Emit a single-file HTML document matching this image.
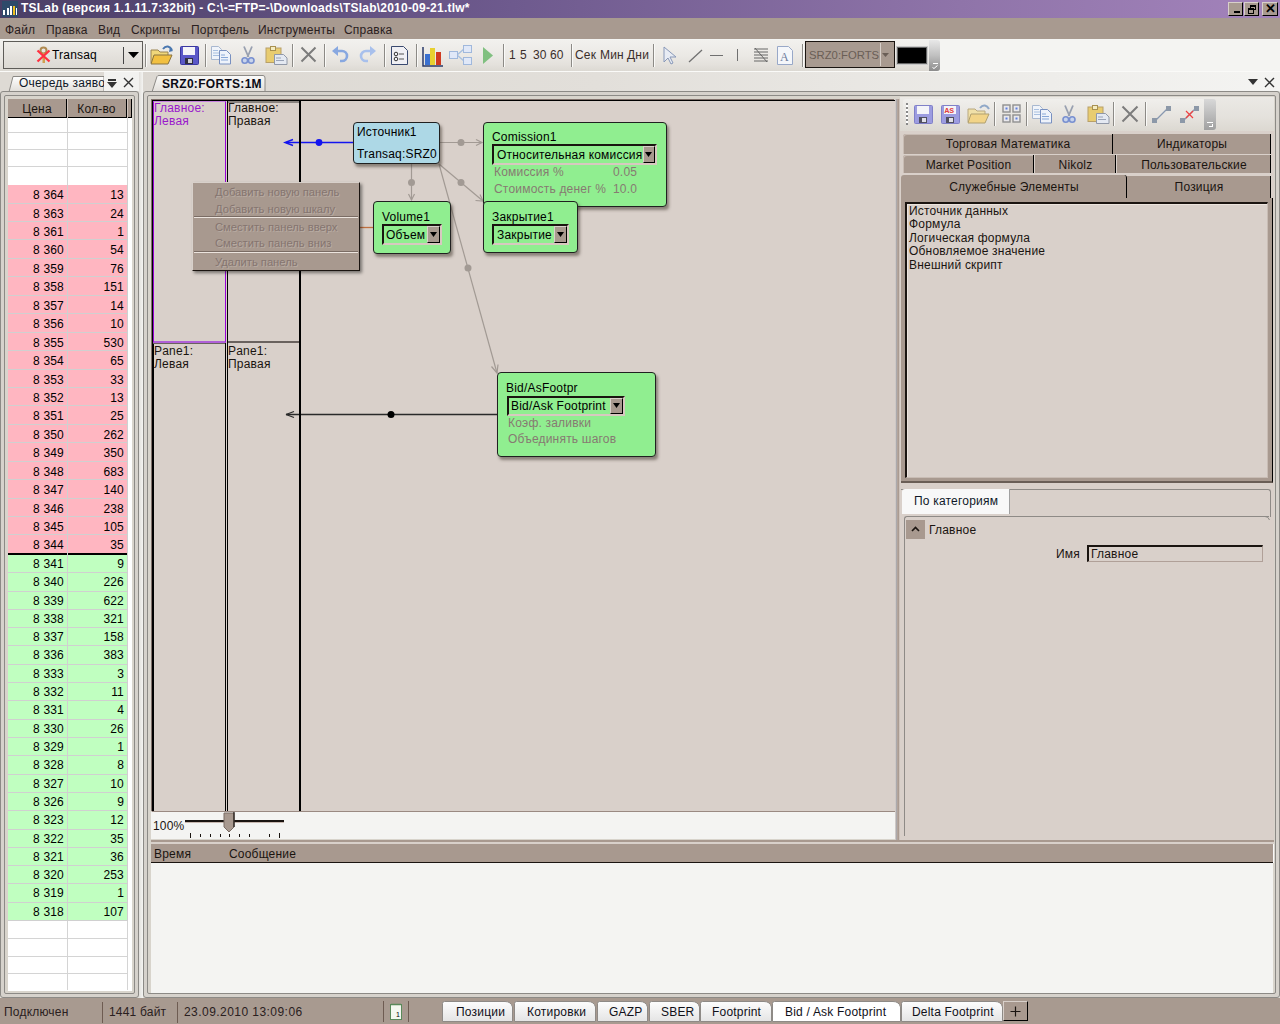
<!DOCTYPE html>
<html><head><meta charset="utf-8">
<style>
*{margin:0;padding:0;box-sizing:border-box}
html,body{width:1280px;height:1024px;overflow:hidden;background:#e2dfd9;font-family:"Liberation Sans",sans-serif;font-size:12px;color:#000}
.a{position:absolute}
.t{position:absolute;white-space:nowrap;line-height:13px;margin-top:1px;letter-spacing:0.2px}
#title{left:0;top:0;width:1280px;height:18px;background:linear-gradient(to right,#4a3e66 0%,#6e5a8e 40%,#8f74a9 75%,#a383bb 100%)}
#menu{left:0;top:18px;width:1280px;height:21px;background:#a89a90}
#tb{left:0;top:39px;width:1280px;height:33px;background:#f4f4f2}
.sep{position:absolute;top:44px;width:2px;height:23px;background:#8c8a86;border-right:1px solid #fafaf8}
#status{left:0;top:998px;width:1280px;height:26px;background:#a89a90}
</style></head><body>

<!-- TITLE -->
<div id="title" class="a">
  <div class="a" style="left:2px;top:1px;width:16px;height:16px;background:#2e4a6a"></div>
  <div class="a" style="left:3px;top:10px;width:2px;height:5px;background:#fff"></div>
  <div class="a" style="left:7px;top:8px;width:2px;height:7px;background:#fff"></div>
  <div class="a" style="left:10px;top:6px;width:2px;height:9px;background:#fff"></div>
  <div class="a" style="left:13px;top:6px;width:2px;height:9px;background:#f0c020"></div>
  <div class="a" style="left:16px;top:8px;width:1px;height:7px;background:#fff"></div>
  <div class="t" style="left:21px;top:1px;color:#fff;font-weight:bold;font-size:12px;letter-spacing:0.22px">TSLab (версия 1.1.11.7:32bit) - C:\-=FTP=-\Downloads\TSlab\2010-09-21.tlw*</div>
  <div class="a" style="left:1228px;top:2px;width:15px;height:14px;background:#a89a90;border:1px solid #000;border-color:#d8d0ca #000 #000 #d8d0ca"><div class="a" style="left:5px;top:8px;width:6px;height:2px;background:#000"></div></div>
  <div class="a" style="left:1244px;top:2px;width:15px;height:14px;background:#a89a90;border:1px solid #000;border-color:#d8d0ca #000 #000 #d8d0ca"><div class="a" style="left:5px;top:2px;width:6px;height:5px;border:1px solid #000;border-top-width:2px"></div><div class="a" style="left:3px;top:5px;width:6px;height:6px;border:1px solid #000;border-top-width:2px;background:#a89a90"></div></div>
  <div class="a" style="left:1262px;top:2px;width:16px;height:14px;background:#a89a90;border:1px solid #000;border-color:#d8d0ca #000 #000 #d8d0ca;font-size:13px;line-height:12px;text-align:center;font-weight:bold">✕</div>
</div>

<!-- MENU -->
<div id="menu" class="a">
  <div class="t" style="left:5px;top:5px;color:#2a2020">Файл</div>
  <div class="t" style="left:46px;top:5px;color:#2a2020">Правка</div>
  <div class="t" style="left:98px;top:5px;color:#2a2020">Вид</div>
  <div class="t" style="left:131px;top:5px;color:#2a2020">Скрипты</div>
  <div class="t" style="left:191px;top:5px;color:#2a2020">Портфель</div>
  <div class="t" style="left:258px;top:5px;color:#2a2020">Инструменты</div>
  <div class="t" style="left:344px;top:5px;color:#2a2020">Справка</div>
</div>

<!-- TOOLBAR -->
<div id="tb" class="a"></div><div class="a" style="left:0;top:40px;width:940px;height:31px;border-radius:0 3px 3px 0;background:linear-gradient(#f2f1ee,#ebe9e5 50%,#e4e1dc 80%,#dcd9d3)"></div>
<!-- transaq button -->
<div class="a" style="left:3px;top:41px;width:140px;height:28px;border:1px solid #5e5c58;background:linear-gradient(#eeece8,#e4e1dc 55%,#dcd9d3)"></div>
<div class="a" style="left:123px;top:47px;width:1px;height:17px;background:#444"></div>
<svg class="a" style="left:128px;top:52px" width="11" height="6"><path d="M0 0H11L5.5 6Z" fill="#000"/></svg>
<svg class="a" style="left:36px;top:46px" width="16" height="18" viewBox="0 0 16 18">
<circle cx="7.5" cy="4.5" r="3" fill="none" stroke="#b08a50" stroke-width="2"/><rect x="6.5" y="7" width="2.5" height="10" fill="#d0a050"/>
<path d="M1.5 4.5L13.5 15.5M13.5 4.5L1.5 15.5" stroke="#ff3040" stroke-width="2.3"/></svg>
<div class="t" style="left:52px;top:48px;font-size:12px">Transaq</div>
<div class="sep" style="left:145px"></div>
<!-- open -->
<svg class="a" style="left:150px;top:45px" width="24" height="20" viewBox="0 0 24 20">
<path d="M1 5h7l2 2h8v11H1z" fill="#f0d77a" stroke="#9a8450"/>
<path d="M4 10h18l-4 9H1z" fill="#f2c040" stroke="#8a7440"/>
<path d="M13 4c3-4 7-3 9 1" fill="none" stroke="#4a78b0" stroke-width="2"/><path d="M20 2l3 4-4 1z" fill="#4a78b0"/></svg>
<!-- save -->
<svg class="a" style="left:180px;top:46px" width="19" height="19" viewBox="0 0 19 19">
<rect x="0.5" y="0.5" width="18" height="18" rx="1" fill="#5a58c8" stroke="#3a38a0"/>
<rect x="3" y="1" width="12" height="8" fill="#f4f4f8"/><rect x="5" y="12" width="8" height="6" fill="#303040"/><rect x="8" y="13" width="4" height="4" fill="#d0d0d8"/></svg>
<div class="sep" style="left:205px"></div>
<!-- copy -->
<svg class="a" style="left:211px;top:46px" width="21" height="19" viewBox="0 0 21 19">
<path d="M0.5 0.5h7l3 3v10h-10z" fill="#f0f4fa" stroke="#a8b8d0"/><path d="M2 4.5h5M2 7h6M2 9.5h6" stroke="#a8c0e0"/>
<path d="M8.5 4.5h7l4 4v9.5h-11z" fill="#eef3fb" stroke="#7890c0"/><path d="M10 9h4M10 11.5h7M10 14h7" stroke="#88a8d8"/></svg>
<!-- cut -->
<svg class="a" style="left:241px;top:46px" width="14" height="19" viewBox="0 0 14 19">
<path d="M3 0.5L7.5 11M11 0.5L6.5 11" stroke="#98a0b0" stroke-width="1.8"/><circle cx="3.8" cy="14.5" r="2.8" fill="#c8d4ec" stroke="#7890d0" stroke-width="1.6"/><circle cx="10.2" cy="14.5" r="2.8" fill="#c8d4ec" stroke="#7890d0" stroke-width="1.6"/></svg>
<!-- paste -->
<svg class="a" style="left:265px;top:46px" width="23" height="19" viewBox="0 0 23 19">
<rect x="1" y="2" width="15" height="14.5" fill="#e8cc70" stroke="#b8a068"/><rect x="5.5" y="0.5" width="5" height="4" fill="#f4ecc0" stroke="#a89050"/>
<path d="M9.5 8.5h9l3.5 3.5v6.5h-12.5z" fill="#e4e9f2" stroke="#9098a8"/><path d="M11 12h5M11 14.5h8" stroke="#9aa4b8"/></svg>
<div class="sep" style="left:292px"></div>
<!-- X -->
<svg class="a" style="left:300px;top:46px" width="17" height="17"><path d="M1.5 1.5L15.5 15.5M15.5 1.5L1.5 15.5" stroke="#7c7c7c" stroke-width="2"/></svg>
<div class="sep" style="left:324px"></div>
<!-- undo/redo -->
<svg class="a" style="left:332px;top:46px" width="17" height="17" viewBox="0 0 17 17">
<path d="M5 5h5a5 5 0 0 1 0 10H8" fill="none" stroke="#88a8e0" stroke-width="2.6"/><path d="M0 5l6-5v10z" fill="#88a8e0"/></svg>
<svg class="a" style="left:359px;top:46px" width="17" height="17" viewBox="0 0 17 17">
<path d="M12 5H7a5 5 0 0 0 0 10h2" fill="none" stroke="#a8c0ec" stroke-width="2.6"/><path d="M17 5l-6-5v10z" fill="#a8c0ec"/></svg>
<div class="sep" style="left:384px"></div>
<!-- doc -->
<svg class="a" style="left:391px;top:46px" width="17" height="19" viewBox="0 0 17 19">
<path d="M0.5 0.5h12l4 4v14H0.5z" fill="#f0f0f4" stroke="#3a4a70"/><circle cx="5" cy="8" r="1.8" fill="none" stroke="#333"/><circle cx="5" cy="13" r="1.8" fill="none" stroke="#333"/><path d="M8 8h5M8 13h5" stroke="#555"/></svg>
<div class="sep" style="left:416px"></div>
<!-- chart -->
<svg class="a" style="left:422px;top:45px" width="22" height="22" viewBox="0 0 22 22">
<path d="M1 2v19h20" fill="none" stroke="#2a3a6a" stroke-width="1.5"/><rect x="3" y="9" width="5" height="11" fill="#3a70d0"/><rect x="8" y="3" width="5" height="17" fill="#e8d030"/><rect x="14" y="7" width="5" height="13" fill="#d03a20"/></svg>
<!-- network -->
<svg class="a" style="left:449px;top:45px" width="23" height="21" viewBox="0 0 23 21">
<path d="M8 10L15 4M8 10L15 16" stroke="#a8c0e0" stroke-width="1.5"/><rect x="0.5" y="6.5" width="8" height="7" fill="#e0e8f8" stroke="#a0b8dc"/><rect x="14.5" y="0.5" width="8" height="7" fill="#e0e8f8" stroke="#a0b8dc"/><rect x="14.5" y="12.5" width="8" height="7" fill="#e0e8f8" stroke="#a0b8dc"/></svg>
<svg class="a" style="left:483px;top:47px" width="10" height="17"><path d="M0 0L10 8.5L0 17Z" fill="#80c080"/></svg>
<div class="sep" style="left:503px"></div>
<div class="t" style="left:509px;top:48px;color:#3a2e2a">1</div><div class="t" style="left:520px;top:48px;color:#3a2e2a">5</div><div class="t" style="left:533px;top:48px;color:#3a2e2a">30</div><div class="t" style="left:550px;top:48px;color:#3a2e2a">60</div>
<div class="sep" style="left:571px"></div>
<div class="t" style="left:575px;top:48px;color:#3a2e2a">Сек</div><div class="t" style="left:600px;top:48px;color:#3a2e2a">Мин</div><div class="t" style="left:627px;top:48px;color:#3a2e2a">Дни</div>
<div class="sep" style="left:653px"></div>
<svg class="a" style="left:663px;top:46px" width="14" height="19" viewBox="0 0 14 19"><path d="M1 1v15l4-4 3 6 2-1-3-6h6z" fill="#e8ecf4" stroke="#8898b8"/></svg>
<svg class="a" style="left:688px;top:49px" width="15" height="14"><path d="M1 13L14 1" stroke="#707070" stroke-width="1.3"/></svg>
<div class="a" style="left:710px;top:55px;width:13px;height:1px;background:#707070"></div>
<div class="a" style="left:737px;top:49px;width:1px;height:12px;background:#707070"></div>
<svg class="a" style="left:753px;top:47px" width="16" height="16" viewBox="0 0 16 16"><path d="M1 2h14M1 5h14M1 8h14M1 11h14M1 14h14" stroke="#666"/><path d="M2 1L14 15" stroke="#666"/></svg>
<svg class="a" style="left:777px;top:46px" width="16" height="19" viewBox="0 0 16 19"><path d="M0.5 0.5h11l4 4v14H0.5z" fill="#f4f6fa" stroke="#98a8c8"/><text x="3" y="15" font-family="Liberation Serif" font-size="12" fill="#6a7a9a">A</text></svg>
<div class="sep" style="left:802px"></div>
<div class="a" style="left:805px;top:41px;width:90px;height:27px;background:#a89a90;border:1px solid #1a1410;border-right-color:#1a1410"></div>
<div class="t" style="left:809px;top:48px;font-size:11.3px;letter-spacing:0;color:#6a5e56">SRZ0:FORTS</div>
<div class="a" style="left:880px;top:43px;width:12px;height:23px;background:#a89a90;border-left:1px solid #d8d0ca"></div>
<svg class="a" style="left:882px;top:53px" width="7" height="4"><path d="M0 0H7L3.5 4Z" fill="#6a5e56"/></svg>
<div class="a" style="left:897px;top:47px;width:30px;height:17px;background:#000;border:1px solid #666;box-shadow:0 0 0 1px #c8c8c8"></div>
<div class="a" style="left:929px;top:40px;width:11px;height:31px;background:linear-gradient(#e8e8e8,#c0c0c0 50%,#8c8c8c);border-radius:0 3px 3px 0"></div>
<div class="a" style="left:933px;top:63px;width:5px;height:1px;background:#fff"></div><svg class="a" style="left:932px;top:65px" width="6" height="4"><path d="M0.5 2.5L2 3.5L5.5 0.5" stroke="#fff" fill="none"/></svg>



<!-- LEFT DOCK -->
<div class="a" style="left:0;top:72px;width:143px;height:925px;background:#dedad4"></div>
<div class="a" style="left:104px;top:72px;width:35px;height:19px;background:#f2f2f0"></div>
<svg class="a" style="left:0;top:72px" width="140" height="22"><path d="M9 20L13 4.5H104V20" fill="url(#tabg)" stroke="#8c8a86"/><defs><linearGradient id="tabg" x1="0" y1="0" x2="0" y2="1"><stop offset="0" stop-color="#fff"/><stop offset="1" stop-color="#e0ddd8"/></linearGradient></defs></svg>
<div class="t" style="left:19px;top:76px;font-size:12px;color:#101828">Очередь заявок</div>
<div class="a" style="left:104px;top:72px;width:35px;height:19px;background:#f2f2f0"></div>
<div class="a" style="left:108px;top:79px;width:8px;height:2px;background:#333"></div>
<svg class="a" style="left:107px;top:82px" width="10" height="6"><path d="M0 0H10L5 6Z" fill="#333"/></svg>
<svg class="a" style="left:123px;top:77px" width="11" height="11"><path d="M1 1L10 10M10 1L1 10" stroke="#333" stroke-width="1.4"/></svg>
<div class="a" style="left:0;top:91px;width:139px;height:907px;border:1px solid #8c8a86;border-radius:3px;background:#d6d2cc"></div>
<div class="a" style="left:4px;top:95px;width:131px;height:899px;border:1px solid #8c8a86;border-radius:2px;background:#d8d4cc"></div><div class="a" style="left:8px;top:118px;width:124px;height:873px;background:#fff"></div>
<div class="a" style="left:8px;top:99px;width:124px;height:19px;background:#a8998f;border-bottom:1px solid #000"></div>
<div class="a" style="left:66px;top:99px;width:1px;height:19px;background:#000;box-shadow:1px 0 0 #d0c4bc"></div>
<div class="a" style="left:126px;top:99px;width:1px;height:19px;background:#000;box-shadow:1px 0 0 #d0c4bc"></div>
<div class="a" style="left:131px;top:99px;width:1px;height:19px;background:#000"></div>
<div class="t" style="left:8px;top:102px;width:58px;text-align:center;color:#1a1410">Цена</div>
<div class="t" style="left:67px;top:102px;width:59px;text-align:center;color:#1a1410">Кол-во</div>
<div class="a" style="left:67px;top:118px;width:1px;height:872px;background:#d4d4d4"></div>
<div class="a" style="left:127px;top:118px;width:1px;height:872px;background:#d4d4d4"></div>
<div class="a" style="left:8px;top:132px;width:120px;height:1px;background:#d4d4d4"></div>
<div class="a" style="left:8px;top:149px;width:120px;height:1px;background:#d4d4d4"></div>
<div class="a" style="left:8px;top:166px;width:120px;height:1px;background:#d4d4d4"></div>
<div class="a" style="left:8px;top:185px;width:120px;height:19px;background:#ffb6c1"></div>
<div class="t" style="left:8px;top:188px;width:56px;text-align:right">8 364</div>
<div class="t" style="left:68px;top:188px;width:56px;text-align:right">13</div>
<div class="a" style="left:8px;top:203px;width:120px;height:1px;background:#d0d0d0"></div>
<div class="a" style="left:8px;top:204px;width:120px;height:18px;background:#ffb6c1"></div>
<div class="t" style="left:8px;top:207px;width:56px;text-align:right">8 363</div>
<div class="t" style="left:68px;top:207px;width:56px;text-align:right">24</div>
<div class="a" style="left:8px;top:221px;width:120px;height:1px;background:#d0d0d0"></div>
<div class="a" style="left:8px;top:222px;width:120px;height:18px;background:#ffb6c1"></div>
<div class="t" style="left:8px;top:225px;width:56px;text-align:right">8 361</div>
<div class="t" style="left:68px;top:225px;width:56px;text-align:right">1</div>
<div class="a" style="left:8px;top:239px;width:120px;height:1px;background:#d0d0d0"></div>
<div class="a" style="left:8px;top:240px;width:120px;height:19px;background:#ffb6c1"></div>
<div class="t" style="left:8px;top:243px;width:56px;text-align:right">8 360</div>
<div class="t" style="left:68px;top:243px;width:56px;text-align:right">54</div>
<div class="a" style="left:8px;top:258px;width:120px;height:1px;background:#d0d0d0"></div>
<div class="a" style="left:8px;top:259px;width:120px;height:18px;background:#ffb6c1"></div>
<div class="t" style="left:8px;top:262px;width:56px;text-align:right">8 359</div>
<div class="t" style="left:68px;top:262px;width:56px;text-align:right">76</div>
<div class="a" style="left:8px;top:276px;width:120px;height:1px;background:#d0d0d0"></div>
<div class="a" style="left:8px;top:277px;width:120px;height:19px;background:#ffb6c1"></div>
<div class="t" style="left:8px;top:280px;width:56px;text-align:right">8 358</div>
<div class="t" style="left:68px;top:280px;width:56px;text-align:right">151</div>
<div class="a" style="left:8px;top:295px;width:120px;height:1px;background:#d0d0d0"></div>
<div class="a" style="left:8px;top:296px;width:120px;height:18px;background:#ffb6c1"></div>
<div class="t" style="left:8px;top:299px;width:56px;text-align:right">8 357</div>
<div class="t" style="left:68px;top:299px;width:56px;text-align:right">14</div>
<div class="a" style="left:8px;top:313px;width:120px;height:1px;background:#d0d0d0"></div>
<div class="a" style="left:8px;top:314px;width:120px;height:19px;background:#ffb6c1"></div>
<div class="t" style="left:8px;top:317px;width:56px;text-align:right">8 356</div>
<div class="t" style="left:68px;top:317px;width:56px;text-align:right">10</div>
<div class="a" style="left:8px;top:332px;width:120px;height:1px;background:#d0d0d0"></div>
<div class="a" style="left:8px;top:333px;width:120px;height:18px;background:#ffb6c1"></div>
<div class="t" style="left:8px;top:336px;width:56px;text-align:right">8 355</div>
<div class="t" style="left:68px;top:336px;width:56px;text-align:right">530</div>
<div class="a" style="left:8px;top:350px;width:120px;height:1px;background:#d0d0d0"></div>
<div class="a" style="left:8px;top:351px;width:120px;height:19px;background:#ffb6c1"></div>
<div class="t" style="left:8px;top:354px;width:56px;text-align:right">8 354</div>
<div class="t" style="left:68px;top:354px;width:56px;text-align:right">65</div>
<div class="a" style="left:8px;top:369px;width:120px;height:1px;background:#d0d0d0"></div>
<div class="a" style="left:8px;top:370px;width:120px;height:18px;background:#ffb6c1"></div>
<div class="t" style="left:8px;top:373px;width:56px;text-align:right">8 353</div>
<div class="t" style="left:68px;top:373px;width:56px;text-align:right">33</div>
<div class="a" style="left:8px;top:387px;width:120px;height:1px;background:#d0d0d0"></div>
<div class="a" style="left:8px;top:388px;width:120px;height:18px;background:#ffb6c1"></div>
<div class="t" style="left:8px;top:391px;width:56px;text-align:right">8 352</div>
<div class="t" style="left:68px;top:391px;width:56px;text-align:right">13</div>
<div class="a" style="left:8px;top:405px;width:120px;height:1px;background:#d0d0d0"></div>
<div class="a" style="left:8px;top:406px;width:120px;height:19px;background:#ffb6c1"></div>
<div class="t" style="left:8px;top:409px;width:56px;text-align:right">8 351</div>
<div class="t" style="left:68px;top:409px;width:56px;text-align:right">25</div>
<div class="a" style="left:8px;top:424px;width:120px;height:1px;background:#d0d0d0"></div>
<div class="a" style="left:8px;top:425px;width:120px;height:18px;background:#ffb6c1"></div>
<div class="t" style="left:8px;top:428px;width:56px;text-align:right">8 350</div>
<div class="t" style="left:68px;top:428px;width:56px;text-align:right">262</div>
<div class="a" style="left:8px;top:442px;width:120px;height:1px;background:#d0d0d0"></div>
<div class="a" style="left:8px;top:443px;width:120px;height:19px;background:#ffb6c1"></div>
<div class="t" style="left:8px;top:446px;width:56px;text-align:right">8 349</div>
<div class="t" style="left:68px;top:446px;width:56px;text-align:right">350</div>
<div class="a" style="left:8px;top:461px;width:120px;height:1px;background:#d0d0d0"></div>
<div class="a" style="left:8px;top:462px;width:120px;height:18px;background:#ffb6c1"></div>
<div class="t" style="left:8px;top:465px;width:56px;text-align:right">8 348</div>
<div class="t" style="left:68px;top:465px;width:56px;text-align:right">683</div>
<div class="a" style="left:8px;top:479px;width:120px;height:1px;background:#d0d0d0"></div>
<div class="a" style="left:8px;top:480px;width:120px;height:19px;background:#ffb6c1"></div>
<div class="t" style="left:8px;top:483px;width:56px;text-align:right">8 347</div>
<div class="t" style="left:68px;top:483px;width:56px;text-align:right">140</div>
<div class="a" style="left:8px;top:498px;width:120px;height:1px;background:#d0d0d0"></div>
<div class="a" style="left:8px;top:499px;width:120px;height:18px;background:#ffb6c1"></div>
<div class="t" style="left:8px;top:502px;width:56px;text-align:right">8 346</div>
<div class="t" style="left:68px;top:502px;width:56px;text-align:right">238</div>
<div class="a" style="left:8px;top:516px;width:120px;height:1px;background:#d0d0d0"></div>
<div class="a" style="left:8px;top:517px;width:120px;height:18px;background:#ffb6c1"></div>
<div class="t" style="left:8px;top:520px;width:56px;text-align:right">8 345</div>
<div class="t" style="left:68px;top:520px;width:56px;text-align:right">105</div>
<div class="a" style="left:8px;top:534px;width:120px;height:1px;background:#d0d0d0"></div>
<div class="a" style="left:8px;top:535px;width:120px;height:18px;background:#ffb6c1"></div>
<div class="t" style="left:8px;top:538px;width:56px;text-align:right">8 344</div>
<div class="t" style="left:68px;top:538px;width:56px;text-align:right">35</div>
<div class="a" style="left:8px;top:553px;width:120px;height:2px;background:#000"></div>
<div class="a" style="left:8px;top:555px;width:120px;height:18px;background:#c0ffc0"></div>
<div class="t" style="left:8px;top:557px;width:56px;text-align:right">8 341</div>
<div class="t" style="left:68px;top:557px;width:56px;text-align:right">9</div>
<div class="a" style="left:8px;top:572px;width:120px;height:1px;background:#d0d0d0"></div>
<div class="a" style="left:8px;top:573px;width:120px;height:19px;background:#c0ffc0"></div>
<div class="t" style="left:8px;top:575px;width:56px;text-align:right">8 340</div>
<div class="t" style="left:68px;top:575px;width:56px;text-align:right">226</div>
<div class="a" style="left:8px;top:591px;width:120px;height:1px;background:#d0d0d0"></div>
<div class="a" style="left:8px;top:592px;width:120px;height:18px;background:#c0ffc0"></div>
<div class="t" style="left:8px;top:594px;width:56px;text-align:right">8 339</div>
<div class="t" style="left:68px;top:594px;width:56px;text-align:right">622</div>
<div class="a" style="left:8px;top:609px;width:120px;height:1px;background:#d0d0d0"></div>
<div class="a" style="left:8px;top:610px;width:120px;height:18px;background:#c0ffc0"></div>
<div class="t" style="left:8px;top:612px;width:56px;text-align:right">8 338</div>
<div class="t" style="left:68px;top:612px;width:56px;text-align:right">321</div>
<div class="a" style="left:8px;top:627px;width:120px;height:1px;background:#d0d0d0"></div>
<div class="a" style="left:8px;top:628px;width:120px;height:18px;background:#c0ffc0"></div>
<div class="t" style="left:8px;top:630px;width:56px;text-align:right">8 337</div>
<div class="t" style="left:68px;top:630px;width:56px;text-align:right">158</div>
<div class="a" style="left:8px;top:645px;width:120px;height:1px;background:#d0d0d0"></div>
<div class="a" style="left:8px;top:646px;width:120px;height:19px;background:#c0ffc0"></div>
<div class="t" style="left:8px;top:648px;width:56px;text-align:right">8 336</div>
<div class="t" style="left:68px;top:648px;width:56px;text-align:right">383</div>
<div class="a" style="left:8px;top:664px;width:120px;height:1px;background:#d0d0d0"></div>
<div class="a" style="left:8px;top:665px;width:120px;height:18px;background:#c0ffc0"></div>
<div class="t" style="left:8px;top:667px;width:56px;text-align:right">8 333</div>
<div class="t" style="left:68px;top:667px;width:56px;text-align:right">3</div>
<div class="a" style="left:8px;top:682px;width:120px;height:1px;background:#d0d0d0"></div>
<div class="a" style="left:8px;top:683px;width:120px;height:18px;background:#c0ffc0"></div>
<div class="t" style="left:8px;top:685px;width:56px;text-align:right">8 332</div>
<div class="t" style="left:68px;top:685px;width:56px;text-align:right">11</div>
<div class="a" style="left:8px;top:700px;width:120px;height:1px;background:#d0d0d0"></div>
<div class="a" style="left:8px;top:701px;width:120px;height:19px;background:#c0ffc0"></div>
<div class="t" style="left:8px;top:703px;width:56px;text-align:right">8 331</div>
<div class="t" style="left:68px;top:703px;width:56px;text-align:right">4</div>
<div class="a" style="left:8px;top:719px;width:120px;height:1px;background:#d0d0d0"></div>
<div class="a" style="left:8px;top:720px;width:120px;height:18px;background:#c0ffc0"></div>
<div class="t" style="left:8px;top:722px;width:56px;text-align:right">8 330</div>
<div class="t" style="left:68px;top:722px;width:56px;text-align:right">26</div>
<div class="a" style="left:8px;top:737px;width:120px;height:1px;background:#d0d0d0"></div>
<div class="a" style="left:8px;top:738px;width:120px;height:18px;background:#c0ffc0"></div>
<div class="t" style="left:8px;top:740px;width:56px;text-align:right">8 329</div>
<div class="t" style="left:68px;top:740px;width:56px;text-align:right">1</div>
<div class="a" style="left:8px;top:755px;width:120px;height:1px;background:#d0d0d0"></div>
<div class="a" style="left:8px;top:756px;width:120px;height:19px;background:#c0ffc0"></div>
<div class="t" style="left:8px;top:758px;width:56px;text-align:right">8 328</div>
<div class="t" style="left:68px;top:758px;width:56px;text-align:right">8</div>
<div class="a" style="left:8px;top:774px;width:120px;height:1px;background:#d0d0d0"></div>
<div class="a" style="left:8px;top:775px;width:120px;height:18px;background:#c0ffc0"></div>
<div class="t" style="left:8px;top:777px;width:56px;text-align:right">8 327</div>
<div class="t" style="left:68px;top:777px;width:56px;text-align:right">10</div>
<div class="a" style="left:8px;top:792px;width:120px;height:1px;background:#d0d0d0"></div>
<div class="a" style="left:8px;top:793px;width:120px;height:18px;background:#c0ffc0"></div>
<div class="t" style="left:8px;top:795px;width:56px;text-align:right">8 326</div>
<div class="t" style="left:68px;top:795px;width:56px;text-align:right">9</div>
<div class="a" style="left:8px;top:810px;width:120px;height:1px;background:#d0d0d0"></div>
<div class="a" style="left:8px;top:811px;width:120px;height:19px;background:#c0ffc0"></div>
<div class="t" style="left:8px;top:813px;width:56px;text-align:right">8 323</div>
<div class="t" style="left:68px;top:813px;width:56px;text-align:right">12</div>
<div class="a" style="left:8px;top:829px;width:120px;height:1px;background:#d0d0d0"></div>
<div class="a" style="left:8px;top:830px;width:120px;height:18px;background:#c0ffc0"></div>
<div class="t" style="left:8px;top:832px;width:56px;text-align:right">8 322</div>
<div class="t" style="left:68px;top:832px;width:56px;text-align:right">35</div>
<div class="a" style="left:8px;top:847px;width:120px;height:1px;background:#d0d0d0"></div>
<div class="a" style="left:8px;top:848px;width:120px;height:18px;background:#c0ffc0"></div>
<div class="t" style="left:8px;top:850px;width:56px;text-align:right">8 321</div>
<div class="t" style="left:68px;top:850px;width:56px;text-align:right">36</div>
<div class="a" style="left:8px;top:865px;width:120px;height:1px;background:#d0d0d0"></div>
<div class="a" style="left:8px;top:866px;width:120px;height:18px;background:#c0ffc0"></div>
<div class="t" style="left:8px;top:868px;width:56px;text-align:right">8 320</div>
<div class="t" style="left:68px;top:868px;width:56px;text-align:right">253</div>
<div class="a" style="left:8px;top:883px;width:120px;height:1px;background:#d0d0d0"></div>
<div class="a" style="left:8px;top:884px;width:120px;height:19px;background:#c0ffc0"></div>
<div class="t" style="left:8px;top:886px;width:56px;text-align:right">8 319</div>
<div class="t" style="left:68px;top:886px;width:56px;text-align:right">1</div>
<div class="a" style="left:8px;top:902px;width:120px;height:1px;background:#d0d0d0"></div>
<div class="a" style="left:8px;top:903px;width:120px;height:18px;background:#c0ffc0"></div>
<div class="t" style="left:8px;top:905px;width:56px;text-align:right">8 318</div>
<div class="t" style="left:68px;top:905px;width:56px;text-align:right">107</div>
<div class="a" style="left:8px;top:920px;width:120px;height:1px;background:#d0d0d0"></div>
<div class="a" style="left:8px;top:938px;width:120px;height:1px;background:#d4d4d4"></div>
<div class="a" style="left:8px;top:956px;width:120px;height:1px;background:#d4d4d4"></div>
<div class="a" style="left:8px;top:973px;width:120px;height:1px;background:#d4d4d4"></div>
<div class="a" style="left:67px;top:185px;width:1px;height:736px;background:#d0d0d0"></div>
<div class="a" style="left:127px;top:185px;width:1px;height:736px;background:#d0d0d0"></div>


<!-- DOC AREA -->
<div class="a" style="left:139px;top:72px;width:4px;height:926px;background:linear-gradient(to right,#e2e0dc,#f4f4f2)"></div>
<div class="a" style="left:143px;top:72px;width:1137px;height:925px;background:#e2e0dc"></div><div class="a" style="left:143px;top:72px;width:1137px;height:19px;background:linear-gradient(to right,#dcd8d2,#e2dfda 40%,#f4f4f2)"></div><div class="a" style="left:0;top:71px;width:1280px;height:1px;background:#fafaf8"></div>
<svg class="a" style="left:143px;top:72px" width="130" height="22"><path d="M9 20L14 4.5Q14.5 3.5 16 3.5H120Q122 3.5 122 6V20" fill="url(#tabg2)" stroke="#8c8a86"/><defs><linearGradient id="tabg2" x1="0" y1="0" x2="0" y2="1"><stop offset="0" stop-color="#fbfbfa"/><stop offset="1" stop-color="#e2dfda"/></linearGradient></defs></svg>
<div class="t" style="left:162px;top:77px;font-weight:bold;font-size:12px;color:#0a0a14;letter-spacing:0.3px">SRZ0:FORTS:1M</div>
<svg class="a" style="left:1248px;top:79px" width="10" height="6"><path d="M0 0H10L5 6Z" fill="#333"/></svg>
<svg class="a" style="left:1264px;top:77px" width="11" height="11"><path d="M1 1L10 10M10 1L1 10" stroke="#333" stroke-width="1.4"/></svg>
<div class="a" style="left:143px;top:91px;width:1137px;height:907px;border:1px solid #8c8a86;border-radius:3px;background:#d6d2cc"></div>
<div class="a" style="left:147px;top:95px;width:1129px;height:899px;border:1px solid #8c8a86;border-radius:2px;background:#d8d4cc"></div><div class="a" style="left:151px;top:863px;width:1122px;height:130px;background:#f4f4f2"></div>

<!-- canvas -->
<div class="a" style="left:152px;top:100px;width:743px;height:712px;background:#d9d0ca;border-top:1px solid #000;border-left:1px solid #000;box-shadow:-1px -1px 0 #80706a"></div>
<div class="a" style="left:151px;top:812px;width:1px;height:27px;background:#a8998f"></div>
<!-- connections -->
<svg class="a" style="left:151px;top:99px" width="744" height="713">
<g transform="translate(-151,-99)">
<path d="M286 142.5H354" stroke="#1414f0" stroke-width="1.3"/>
<path d="M293 139.5L285 142.5L293 145.5" fill="none" stroke="#1414f0" stroke-width="1.4"/>
<circle cx="319" cy="142.5" r="3.4" fill="#1414f0"/>
<path d="M286 414.5H497" stroke="#2a2a2a" stroke-width="1.3"/>
<path d="M286 414.5l8 -3M286 414.5l8 3" stroke="#2a2a2a" stroke-width="1.3"/>
<circle cx="391" cy="414.5" r="3.5" fill="#000"/>
<path d="M360 227.5H373" stroke="#c07040" stroke-width="1.3"/>
<g stroke="#a29a94" stroke-width="1.2" fill="none">
<path d="M439 142.5H482"/><path d="M476 139.5l6 3l-6 3"/>
<path d="M411.5 164V200"/><path d="M408.5 194l3 6l3 -6"/>
<path d="M439 164L483 201"/><path d="M475.5 200.5l7.5 0.5l-3 -6.5"/>
<path d="M439 164L497 373"/><path d="M491.5 366.5l5.5 6.5l1 -8.5"/>
</g>
<g fill="#a29a94"><circle cx="461" cy="142.5" r="3.5"/><circle cx="411.5" cy="182.5" r="3.5"/><circle cx="461" cy="182.5" r="3.5"/><circle cx="468" cy="268" r="3.5"/></g>
</g></svg>

<!-- panes -->
<div class="a" style="left:153px;top:101px;width:73px;height:242px;border:1px solid #9800d8;border-top:1px solid #c880e0;border-bottom:2px solid #b060d8"></div><div class="a" style="left:153px;top:343px;width:1px;height:469px;background:#000"></div>
<div class="a" style="left:227px;top:101px;width:1px;height:711px;background:#000"></div><div class="a" style="left:225px;top:343px;width:1px;height:469px;background:#000"></div>
<div class="a" style="left:299px;top:100px;width:2px;height:712px;background:#000"></div>
<div class="a" style="left:228px;top:101px;width:71px;height:2px;background:#8a8480"></div>
<div class="a" style="left:228px;top:341px;width:71px;height:2px;background:#6a625e"></div>
<div class="a" style="left:153px;top:343px;width:72px;height:1px;background:#6a625e"></div>
<div class="t" style="left:154px;top:100.5px;color:#9a18cc;line-height:13.5px">Главное:<br>Левая</div>
<div class="t" style="left:228px;top:100.5px;color:#1a1410;line-height:13.5px">Главное:<br>Правая</div>
<div class="t" style="left:154px;top:343.5px;color:#1a1410;line-height:13.5px">Pane1:<br>Левая</div>
<div class="t" style="left:228px;top:343.5px;color:#1a1410;line-height:13.5px">Pane1:<br>Правая</div>

<!-- nodes -->
<div class="a" style="left:353px;top:121.5px;width:87px;height:42.5px;background:#add8e6;border:1px solid #202020;border-radius:4px;box-shadow:2px 3px 3px rgba(60,50,40,.5)"></div>
<div class="t" style="left:357px;top:125px">Источник1</div>
<div class="t" style="left:357px;top:147px">Transaq:SRZ0</div>

<div class="a" style="left:483px;top:122px;width:184px;height:85px;background:#90ee90;border:1px solid #202020;border-radius:4px;box-shadow:2px 3px 3px rgba(60,50,40,.5)"></div>
<div class="t" style="left:492px;top:130px">Comission1</div>
<div class="a" style="left:492px;top:144px;width:165px;height:21px;border:2px solid #1a1410;border-right-color:#d8c8c0;border-bottom-color:#d8c8c0;background:#90ee90"></div>
<div class="t" style="left:497px;top:148px">Относительная комиссия</div>
<div class="a" style="left:643px;top:146px;width:12px;height:17px;background:#a8998f;border:1px solid #000;border-color:#d8d0ca #000 #000 #d8d0ca"></div>
<svg class="a" style="left:645px;top:152px" width="7" height="5"><path d="M0 0H7L3.5 5Z" fill="#000"/></svg>
<div class="t" style="left:494px;top:165px;color:#877a72">Комиссия %</div>
<div class="t" style="left:613px;top:165px;color:#877a72">0.05</div>
<div class="t" style="left:494px;top:182px;color:#877a72">Стоимость денег %</div>
<div class="t" style="left:613px;top:182px;color:#877a72">10.0</div>

<div class="a" style="left:373px;top:201px;width:78px;height:53px;background:#90ee90;border:1px solid #202020;border-radius:4px;box-shadow:2px 3px 3px rgba(60,50,40,.5)"></div>
<div class="t" style="left:382px;top:210px">Volume1</div>
<div class="a" style="left:382px;top:224px;width:60px;height:21px;border:2px solid #1a1410;border-right-color:#d8c8c0;border-bottom-color:#d8c8c0;background:#90ee90"></div>
<div class="t" style="left:386px;top:228px">Объем</div>
<div class="a" style="left:427px;top:226px;width:13px;height:17px;background:#a8998f;border:1px solid #000;border-color:#d8d0ca #000 #000 #d8d0ca"></div>
<svg class="a" style="left:430px;top:232px" width="7" height="5"><path d="M0 0H7L3.5 5Z" fill="#000"/></svg>

<div class="a" style="left:483px;top:201px;width:95px;height:52px;background:#90ee90;border:1px solid #202020;border-radius:4px;box-shadow:2px 3px 3px rgba(60,50,40,.5)"></div>
<div class="t" style="left:492px;top:210px">Закрытие1</div>
<div class="a" style="left:492px;top:224px;width:77px;height:21px;border:2px solid #1a1410;border-right-color:#d8c8c0;border-bottom-color:#d8c8c0;background:#90ee90"></div>
<div class="t" style="left:497px;top:228px">Закрытие</div>
<div class="a" style="left:554px;top:226px;width:13px;height:17px;background:#a8998f;border:1px solid #000;border-color:#d8d0ca #000 #000 #d8d0ca"></div>
<svg class="a" style="left:557px;top:232px" width="7" height="5"><path d="M0 0H7L3.5 5Z" fill="#000"/></svg>

<div class="a" style="left:497px;top:372px;width:159px;height:85px;background:#90ee90;border:1px solid #202020;border-radius:4px;box-shadow:2px 3px 3px rgba(60,50,40,.5)"></div>
<div class="t" style="left:506px;top:381px">Bid/AsFootpr</div>
<div class="a" style="left:507px;top:396px;width:118px;height:20px;border:2px solid #1a1410;border-right-color:#d8c8c0;border-bottom-color:#d8c8c0;background:#90ee90"></div>
<div class="t" style="left:511px;top:399px">Bid/Ask Footprint</div>
<div class="a" style="left:610px;top:398px;width:13px;height:16px;background:#a8998f;border:1px solid #000;border-color:#d8d0ca #000 #000 #d8d0ca"></div>
<svg class="a" style="left:613px;top:403px" width="7" height="5"><path d="M0 0H7L3.5 5Z" fill="#000"/></svg>
<div class="t" style="left:508px;top:416px;color:#877a72">Коэф. заливки</div>
<div class="t" style="left:508px;top:432px;color:#877a72">Объединять шагов</div>

<!-- context menu -->
<div class="a" style="left:192px;top:182px;width:168px;height:89px;background:#a8998f;border:1px solid;border-color:#d8d0ca #1a1410 #1a1410 #d8d0ca;box-shadow:2px 2px 3px rgba(0,0,0,.45)"></div>
<div class="a" style="left:194px;top:216px;width:164px;height:2px;background:#7a6c64;border-bottom:1px solid #ece4de"></div>
<div class="a" style="left:194px;top:251px;width:164px;height:2px;background:#7a6c64;border-bottom:1px solid #ece4de"></div>
<div class="t" style="left:215px;top:185px;color:#857570;font-size:11.2px;letter-spacing:0;text-shadow:1px 1px 0 rgba(216,208,202,.35)">Добавить новую панель</div>
<div class="t" style="left:215px;top:202px;color:#857570;font-size:11.2px;letter-spacing:0;text-shadow:1px 1px 0 rgba(216,208,202,.35)">Добавить новую шкалу</div>
<div class="t" style="left:215px;top:220px;color:#857570;font-size:11.2px;letter-spacing:0;text-shadow:1px 1px 0 rgba(216,208,202,.35)">Сместить панель вверх</div>
<div class="t" style="left:215px;top:236px;color:#857570;font-size:11.2px;letter-spacing:0;text-shadow:1px 1px 0 rgba(216,208,202,.35)">Сместить панель вниз</div>
<div class="t" style="left:215px;top:255px;color:#857570;font-size:11.2px;letter-spacing:0;text-shadow:1px 1px 0 rgba(216,208,202,.35)">Удалить панель</div>

<!-- slider / zoom -->
<div class="a" style="left:152px;top:811px;width:743px;height:1px;background:#9a8a82"></div>
<div class="a" style="left:151px;top:812px;width:744px;height:27px;background:#f4f4f2"></div>
<div class="t" style="left:153px;top:819px;color:#1a1410">100%</div>
<div class="a" style="left:185px;top:820px;width:99px;height:2px;background:#1a1410;box-shadow:0 1px 0 #c8b8b0"></div>
<svg class="a" style="left:223px;top:812px" width="13" height="21"><path d="M1 1H11V15L6 20L1 15Z" fill="#a8998f" stroke="#7a6c64"/><path d="M11 0V15" stroke="#1a1410" stroke-width="1.2"/></svg>
<div class="a" style="left:190px;top:833px;width:1px;height:5px;background:#1a1410"></div>
<div class="a" style="left:200px;top:834px;width:1px;height:3px;background:#1a1410"></div>
<div class="a" style="left:210px;top:834px;width:1px;height:3px;background:#1a1410"></div>
<div class="a" style="left:220px;top:834px;width:1px;height:3px;background:#1a1410"></div>
<div class="a" style="left:229px;top:834px;width:1px;height:3px;background:#1a1410"></div>
<div class="a" style="left:239px;top:834px;width:1px;height:3px;background:#1a1410"></div>
<div class="a" style="left:249px;top:834px;width:1px;height:3px;background:#1a1410"></div>
<div class="a" style="left:269px;top:834px;width:1px;height:3px;background:#1a1410"></div>
<div class="a" style="left:279px;top:833px;width:1px;height:5px;background:#1a1410"></div>
<div class="a" style="left:895px;top:99px;width:2px;height:741px;background:linear-gradient(to right,#e0d8d2,#9a9aa0)"></div>
<div class="a" style="left:897px;top:99px;width:3px;height:741px;background:linear-gradient(to right,#b8aaa2,#a8998f 60%,#e8e0da)"></div>

<!-- log -->
<div class="a" style="left:151px;top:840px;width:1123px;height:2px;background:#a8998f"></div>
<div class="a" style="left:151px;top:842px;width:1123px;height:2px;background:#d8d0ca"></div>
<div class="a" style="left:151px;top:844px;width:1122px;height:19px;background:#a8998f;border-bottom:1px solid #1a1410;box-shadow:1px 0 0 #f8f8f8"></div>
<div class="t" style="left:154px;top:847px;color:#1a1410">Время</div>
<div class="t" style="left:229px;top:847px;color:#1a1410">Сообщение</div>


<!-- RIGHT PANEL -->
<div class="a" style="left:900px;top:97px;width:374px;height:743px;background:#d9d0ca"></div>
<div class="a" style="left:900px;top:97px;width:374px;height:34px;background:linear-gradient(#ebe9e5,#e4e1dc 60%,#dcd8d1)"></div>
<div class="a" style="left:903px;top:99px;width:302px;height:31px;border-radius:3px;background:linear-gradient(#f0efec,#e6e3de 60%,#dcd9d2)"></div>
<div class="a" style="left:906px;top:103px;width:2px;height:22px;background:repeating-linear-gradient(#888 0 2px,#fff 2px 4px)"></div>
<svg class="a" style="left:914px;top:105px" width="19" height="19" viewBox="0 0 19 19"><rect x="0.5" y="0.5" width="18" height="18" rx="1" fill="#9c9ce0" stroke="#8080c8"/><rect x="3" y="1" width="12" height="8" fill="#f4f4f8"/><rect x="5" y="12" width="8" height="6" fill="#505060"/><rect x="8" y="13" width="4" height="4" fill="#e0e0e8"/></svg>
<svg class="a" style="left:941px;top:105px" width="19" height="19" viewBox="0 0 19 19"><rect x="0.5" y="0.5" width="18" height="18" rx="1" fill="#9c9ce0" stroke="#8080c8"/><rect x="3" y="1" width="12" height="8" fill="#f4f4f8"/><text x="3.5" y="8" font-family="Liberation Mono" font-size="8" font-weight="bold" fill="#e04040">AS</text><rect x="5" y="12" width="8" height="6" fill="#505060"/><rect x="8" y="13" width="4" height="4" fill="#e0e0e8"/></svg>
<svg class="a" style="left:967px;top:104px" width="24" height="20" viewBox="0 0 24 20"><path d="M1 5h7l2 2h8v11H1z" fill="#f0e0a8" stroke="#b8a880"/><path d="M4 10h18l-4 9H1z" fill="#f2d488" stroke="#b0a070"/><path d="M13 4c3-4 7-3 9 1" fill="none" stroke="#90a8c8" stroke-width="2"/></svg>
<div class="a" style="left:994px;top:102px;width:2px;height:24px;background:#8c8a86;border-right:1px solid #fafaf8"></div>
<svg class="a" style="left:1002px;top:104px" width="19" height="19" viewBox="0 0 19 19"><g fill="#e8e8ec" stroke="#909090" stroke-width="1.4"><rect x="1" y="1" width="7" height="7"/><rect x="11" y="1" width="7" height="7"/><rect x="1" y="11" width="7" height="7"/><rect x="11" y="11" width="7" height="7"/></g><g fill="#6080e0"><rect x="3.5" y="3.5" width="2" height="2"/><rect x="13.5" y="3.5" width="2" height="2"/><rect x="3.5" y="13.5" width="2" height="2"/><rect x="13.5" y="13.5" width="2" height="2"/></g></svg>
<div class="a" style="left:1026px;top:102px;width:2px;height:24px;background:#8c8a86;border-right:1px solid #fafaf8"></div>
<svg class="a" style="left:1032px;top:105px" width="21" height="19" viewBox="0 0 21 19"><path d="M0.5 0.5h7l3 3v10h-10z" fill="#f0f4fa" stroke="#a8b8d0"/><path d="M2 4.5h5M2 7h6M2 9.5h6" stroke="#a8c0e0"/><path d="M8.5 4.5h7l4 4v9.5h-11z" fill="#eef3fb" stroke="#7890c0"/><path d="M10 9h4M10 11.5h7M10 14h7" stroke="#88a8d8"/></svg>
<svg class="a" style="left:1062px;top:105px" width="14" height="19" viewBox="0 0 14 19"><path d="M3 0.5L7.5 11M11 0.5L6.5 11" stroke="#98a0b0" stroke-width="1.8"/><circle cx="3.8" cy="14.5" r="2.8" fill="#c8d4ec" stroke="#7890d0" stroke-width="1.6"/><circle cx="10.2" cy="14.5" r="2.8" fill="#c8d4ec" stroke="#7890d0" stroke-width="1.6"/></svg>
<svg class="a" style="left:1087px;top:105px" width="23" height="19" viewBox="0 0 23 19"><rect x="1" y="2" width="15" height="14.5" fill="#e8cc70" stroke="#b8a068"/><rect x="5.5" y="0.5" width="5" height="4" fill="#f4ecc0" stroke="#a89050"/><path d="M9.5 8.5h9l3.5 3.5v6.5h-12.5z" fill="#e4e9f2" stroke="#9098a8"/><path d="M11 12h5M11 14.5h8" stroke="#9aa4b8"/></svg>
<div class="a" style="left:1113px;top:102px;width:2px;height:24px;background:#8c8a86;border-right:1px solid #fafaf8"></div>
<svg class="a" style="left:1121px;top:105px" width="18" height="18"><path d="M1.5 1.5L16.5 16.5M16.5 1.5L1.5 16.5" stroke="#7c7c7c" stroke-width="2"/></svg>
<div class="a" style="left:1145px;top:102px;width:2px;height:24px;background:#8c8a86;border-right:1px solid #fafaf8"></div>
<svg class="a" style="left:1152px;top:105px" width="20" height="19" viewBox="0 0 20 19"><path d="M3 16L16 3" stroke="#8898b0" stroke-width="1.2"/><rect x="0" y="13" width="5" height="5" fill="#8c98a8"/><rect x="14" y="1" width="5" height="5" fill="#8c98a8"/></svg>
<svg class="a" style="left:1180px;top:105px" width="20" height="19" viewBox="0 0 20 19"><path d="M3 16L16 3" stroke="#8898b0" stroke-width="1.2"/><path d="M6 6L13 13M13 6L6 13" stroke="#f04040" stroke-width="1.2"/><rect x="0" y="13" width="5" height="5" fill="#8c98a8"/><rect x="14" y="1" width="5" height="5" fill="#8c98a8"/></svg>
<div class="a" style="left:1204px;top:99px;width:12px;height:31px;border-radius:0 3px 3px 0;background:linear-gradient(#d8d8d8,#a0a0a0)"></div>
<div class="a" style="left:1207px;top:122px;width:6px;height:1px;background:#fff"></div>
<div class="a" style="left:1209px;top:124px;width:4px;height:3px;border-right:1px solid #fff;border-bottom:1px solid #fff"></div>

<!-- tabs -->
<div class="a" style="left:903px;top:134px;width:210px;height:20px;background:#a8998f;border-radius:3px 0 0 0;border-right:1px solid #000;box-shadow:inset 1px 1px 0 #c8bcb4"></div>
<div class="t" style="left:903px;top:137px;width:210px;text-align:center;color:#1a1410">Торговая Математика</div>
<div class="a" style="left:1113px;top:134px;width:158px;height:20px;background:#a8998f;border-right:1px solid #000"></div>
<div class="t" style="left:1113px;top:137px;width:158px;text-align:center;color:#1a1410">Индикаторы</div>
<div class="a" style="left:903px;top:155px;width:131px;height:18px;background:#a8998f;border-radius:3px 0 0 0;border-right:1px solid #000;box-shadow:inset 1px 1px 0 #c8bcb4"></div>
<div class="t" style="left:903px;top:158px;width:131px;text-align:center;color:#1a1410">Market Position</div>
<div class="a" style="left:1035px;top:155px;width:81px;height:18px;background:#a8998f;border-right:1px solid #000"></div>
<div class="t" style="left:1035px;top:158px;width:81px;text-align:center;color:#1a1410">Nikolz</div>
<div class="a" style="left:1117px;top:155px;width:154px;height:18px;background:#a8998f;border-right:1px solid #000"></div>
<div class="t" style="left:1117px;top:158px;width:154px;text-align:center;color:#1a1410">Пользовательские</div>
<div class="a" style="left:901px;top:175px;width:226px;height:26px;background:#a8998f;border-radius:3px 3px 0 0;border-right:1px solid #000"></div>
<div class="t" style="left:901px;top:180px;width:226px;text-align:center;color:#1a1410">Служебные Элементы</div>
<div class="a" style="left:1127px;top:176px;width:144px;height:22px;background:#a8998f;border-right:1px solid #000"></div>
<div class="t" style="left:1127px;top:180px;width:144px;text-align:center;color:#1a1410">Позиция</div>
<div class="a" style="left:901px;top:198px;width:372px;height:285px;background:#a8998f;border-right:1px solid #000;border-bottom:2px solid #6a5e56"></div>
<div class="a" style="left:905px;top:202px;width:363px;height:276px;background:#d9d0ca;border:2px solid #1a1410;border-right:1px solid #c8bcb4;border-bottom:1px solid #c8bcb4;box-shadow:inset 1px 1px 0 #ece4de"></div>
<div class="t" style="left:909px;top:204px;color:#1a1410;line-height:13.4px">Источник данных<br>Формула<br>Логическая формула<br>Обновляемое значение<br>Внешний скрипт</div>

<!-- properties -->
<div class="a" style="left:901px;top:489px;width:370px;height:28px;border-top:1px solid #8e8a86;border-right:1px solid #8e8a86;border-radius:0 3px 0 0"></div>
<div class="a" style="left:902px;top:489px;width:108px;height:25px;background:#f8f8f8;border-radius:3px 0 0 0;border-right:1px solid #a0a0a0"></div>
<div class="t" style="left:914px;top:494px;color:#101828">По категориям</div>
<div class="a" style="left:904px;top:516px;width:365px;height:320px;border:1px solid #8e8a86;border-bottom:none;border-right:none;border-radius:3px 0 0 0"></div><svg class="a" style="left:1262px;top:516px" width="8" height="6"><path d="M0 0.5H3Q6.5 0.5 7.5 4" fill="none" stroke="#8e8a86"/></svg>
<div class="a" style="left:906px;top:520px;width:19px;height:19px;background:#a8998f"></div>
<svg class="a" style="left:911px;top:526px" width="9" height="6"><path d="M1 5L4.5 1.5L8 5" fill="none" stroke="#1a1410" stroke-width="1.6"/></svg>
<div class="t" style="left:929px;top:523px;color:#1a1410">Главное</div>
<div class="t" style="left:1056px;top:547px;color:#1a1410">Имя</div>
<div class="a" style="left:1087px;top:545px;width:176px;height:17px;border:1px solid #b0a098;border-top:2px solid #1a1410;border-left:2px solid #1a1410;background:#d9d0ca"></div>
<div class="t" style="left:1091px;top:547px;color:#1a1410">Главное</div>

<!-- BOTTOM TABS -->

<!-- STATUS -->
<div id="status" class="a">
  <div class="t" style="left:4px;top:7px;color:#2a2020">Подключен</div>
  <div class="a" style="left:102px;top:4px;width:1px;height:21px;background:#6e5c52"></div>
  <div class="t" style="left:109px;top:7px;color:#2a2020">1441 байт</div>
  <div class="a" style="left:177px;top:4px;width:1px;height:21px;background:#6e5c52"></div>
  <div class="t" style="left:184px;top:7px;color:#2a2020;letter-spacing:0.45px">23.09.2010 13:09:06</div>
</div>
<svg width="0" height="0" style="position:absolute"><defs><linearGradient id="btg" x1="0" y1="0" x2="0" y2="1"><stop offset="0" stop-color="#fdfdfd"/><stop offset="1" stop-color="#e4e4e4"/></linearGradient></defs></svg>
<div class="a" style="left:383px;top:1001px;width:1px;height:21px;background:#6e5c52"></div>
<div class="a" style="left:408px;top:1001px;width:1px;height:21px;background:#6e5c52"></div>
<svg class="a" style="left:390px;top:1003px" width="13" height="17" viewBox="0 0 13 17"><rect x="0.5" y="1.5" width="11" height="15" fill="#f4f8f0" stroke="#5a8a5a"/><path d="M2 0.5v2M4 0.5v2M6 0.5v2M8 0.5v2M10 0.5v2" stroke="#5a8a5a"/><text x="6" y="14" font-size="7" font-family="Liberation Sans" fill="#000">1</text></svg>
<svg class="a" style="left:442px;top:1001px" width="72" height="21"><path d="M0.5 20.5V2.5Q0.5 0.5 2.5 0.5H63Q69 0.5 70.5 6V20.5Z" fill="url(#btg)" stroke="#8e8a86"/></svg>
<div class="t" style="left:456px;top:1005px;color:#101018">Позиции</div>
<svg class="a" style="left:514px;top:1001px" width="83" height="21"><path d="M0.5 20.5V2.5Q0.5 0.5 2.5 0.5H74Q80 0.5 81.5 6V20.5Z" fill="url(#btg)" stroke="#8e8a86"/></svg>
<div class="t" style="left:527px;top:1005px;color:#101018">Котировки</div>
<svg class="a" style="left:597px;top:1001px" width="52" height="21"><path d="M0.5 20.5V2.5Q0.5 0.5 2.5 0.5H43Q49 0.5 50.5 6V20.5Z" fill="url(#btg)" stroke="#8e8a86"/></svg>
<div class="t" style="left:609px;top:1005px;color:#101018">GAZP</div>
<svg class="a" style="left:649px;top:1001px" width="52" height="21"><path d="M0.5 20.5V2.5Q0.5 0.5 2.5 0.5H43Q49 0.5 50.5 6V20.5Z" fill="url(#btg)" stroke="#8e8a86"/></svg>
<div class="t" style="left:661px;top:1005px;color:#101018">SBER</div>
<svg class="a" style="left:700px;top:1001px" width="73" height="21"><path d="M0.5 20.5V2.5Q0.5 0.5 2.5 0.5H64Q70 0.5 71.5 6V20.5Z" fill="url(#btg)" stroke="#8e8a86"/></svg>
<div class="t" style="left:712px;top:1005px;color:#101018">Footprint</div>
<svg class="a" style="left:772px;top:1001px" width="130" height="21"><path d="M0.5 20.5V2.5Q0.5 0.5 2.5 0.5H121Q127 0.5 128.5 6V20.5Z" fill="#fff" stroke="#8e8a86"/></svg>
<div class="t" style="left:785px;top:1005px;color:#101018">Bid / Ask Footprint</div>
<svg class="a" style="left:901px;top:1001px" width="103" height="21"><path d="M0.5 20.5V2.5Q0.5 0.5 2.5 0.5H94Q100 0.5 101.5 6V20.5Z" fill="url(#btg)" stroke="#8e8a86"/></svg>
<div class="t" style="left:912px;top:1005px;color:#101018">Delta Footprint</div>
<div class="a" style="left:1003px;top:1001px;width:25px;height:20px;background:#a8998f;border:1px solid;border-color:#d8d0ca #000 #000 #d8d0ca"></div>
<svg class="a" style="left:1010px;top:1006px" width="11" height="11"><path d="M5.5 0.5V10.5M0.5 5.5H10.5" stroke="#1a1410" stroke-width="1.2"/></svg>

</body></html>
